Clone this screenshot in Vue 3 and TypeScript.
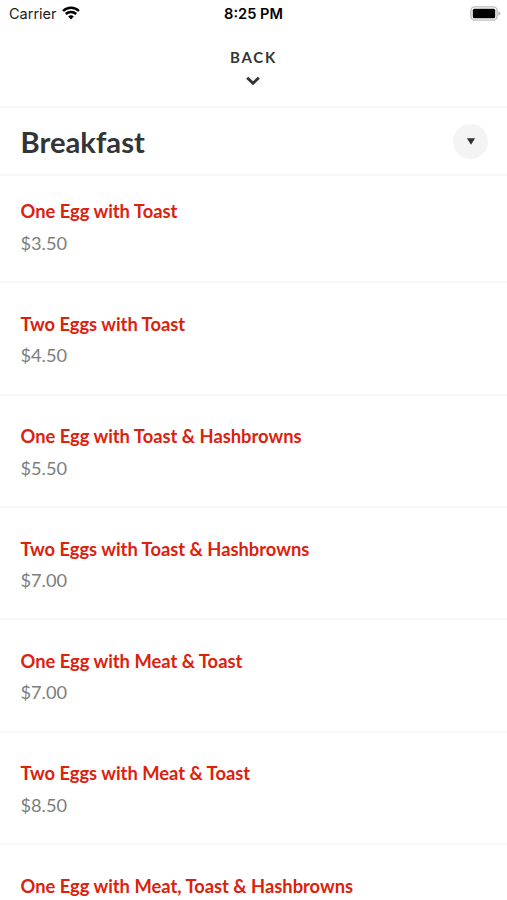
<script setup lang="ts">
interface MenuItem {
  name: string
  price?: string
}

const items: MenuItem[] = [
  { name: 'One Egg with Toast', price: '$3.50' },
  { name: 'Two Eggs with Toast', price: '$4.50' },
  { name: 'One Egg with Toast & Hashbrowns', price: '$5.50' },
  { name: 'Two Eggs with Toast & Hashbrowns', price: '$7.00' },
  { name: 'One Egg with Meat & Toast', price: '$7.00' },
  { name: 'Two Eggs with Meat & Toast', price: '$8.50' },
  { name: 'One Egg with Meat, Toast & Hashbrowns' },
]
</script>

<template>
  <main class="screen">
    <div class="status">
      <div class="carrier">
        <span>Carrier</span>
        <svg class="wifi" viewBox="0 0 18 14" width="18" height="14">
          <path d="M1 5a11.6 11.6 0 0 1 16 0M3.8 8a7.6 7.6 0 0 1 10.4 0" fill="none" stroke="#000" stroke-width="2.4" />
          <path d="M9 13.4 6.2 10.5a4 4 0 0 1 5.6 0z" />
        </svg>
      </div>
      <time class="time">8:25 PM</time>
      <svg class="battery" viewBox="0 0 31 15" width="31" height="15">
        <rect x="0.9" y="0.9" width="26.2" height="13.2" rx="3.8" fill="none" stroke="#bdbdbd" stroke-width="1.4" />
        <rect x="2.8" y="2.8" width="22.4" height="9.4" rx="1.5" />
        <path d="M28.3 5.2Q30.5 6 30.5 7.5T28.3 9.800z" fill="#b5b5b5" />
      </svg>
    </div>
    <button class="back">
      <span class="label">BACK</span>
      <svg viewBox="0 0 14 10" width="14" height="10">
        <path d="M1.2 1.700 7 7.300 12.800 1.700" fill="none" stroke="#333" stroke-width="2.9" />
      </svg>
    </button>
    <header class="section">
      <h1>Breakfast</h1>
      <button class="toggle" aria-label="Choose section">
        <svg viewBox="0 0 10 8" width="10" height="8"><path d="M.9 1.300h8.200L5 7.700z" fill="#333" /></svg>
      </button>
    </header>
    <ul class="menu">
      <li v-for="item in items" :key="item.name" class="item">
        <h2>{{ item.name }}</h2>
        <p v-if="item.price">{{ item.price }}</p>
      </li>
    </ul>
  </main>
</template>

<style>
body { margin: 0; overflow: hidden; }
</style>

<style scoped>
.screen { box-sizing: border-box; height: 900px; overflow: hidden; background: #fff; font-family: Lato, sans-serif; color: #333537; }
button { border: 0; padding: 0; font: inherit; color: inherit; }
.status { display: grid; grid-template-columns: 1fr auto 1fr; align-items: center; height: 27px; padding: 0 6px 0 9px; font-family: Inter, sans-serif; color: #000; }
.carrier { display: flex; align-items: center; gap: 5px; font-size: 14.5px; color: #1c1c1c; }
.wifi { margin-bottom: 1px; }
.time { margin-right: 3px; font-size: 14.6px; font-weight: 600; }
.battery { justify-self: end; margin-bottom: 1px; }
.back { display: flex; flex-direction: column; align-items: center; width: 100%; height: 79px; padding: 21px 1px 0 0; background: #fff; font-size: 15px; line-height: 18px; font-weight: 700; letter-spacing: 1.7px; }
.label { margin-left: 1px; }
.back svg { margin-top: 10px; }
.section { display: flex; align-items: center; justify-content: space-between; box-sizing: border-box; height: 70px; padding: 0 19px 0 20.5px; border-top: 2px solid #f7f7f7; border-bottom: 2px solid #f7f7f7; }
h1 { margin: 2px 0 0; font-size: 29.2px; line-height: 36px; font-weight: 700; }
.toggle { display: grid; place-items: center; width: 35px; height: 35px; border-radius: 50%; background: #f4f4f4; }
.menu { list-style: none; margin: 0; padding: 0; }
.item { box-sizing: border-box; height: 112.4px; padding: 28.6px 20.5px 0; border-bottom: 2px solid #f7f7f7; }
.item:first-child { height: 107.2px; padding-top: 23.4px; }
h2 { margin: 0; font-size: 18.33px; line-height: 24px; font-weight: 700; color: #dc210c; }
p { margin: 7.5px 0 0; font-size: 18.2px; line-height: 24px; color: #7d7d7d; }
</style>
